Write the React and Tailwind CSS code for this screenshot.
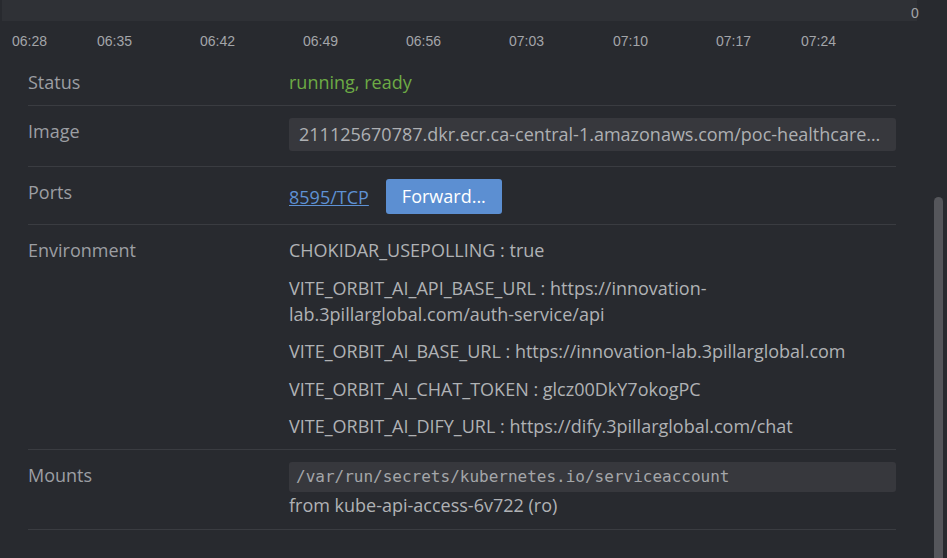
import React from 'react';

const ticks = [
  ['06:28', 12],
  ['06:35', 97],
  ['06:42', 200],
  ['06:49', 303],
  ['06:56', 406],
  ['07:03', 509],
  ['07:10', 613],
  ['07:17', 716],
  ['07:24', 801],
];

const env = [
  ['CHOKIDAR_USEPOLLING', 'true'],
  ['VITE_ORBIT_AI_API_BASE_URL', 'https://innovation-lab.3pillarglobal.com/auth-service/api'],
  ['VITE_ORBIT_AI_BASE_URL', 'https://innovation-lab.3pillarglobal.com'],
  ['VITE_ORBIT_AI_CHAT_TOKEN', 'glcz00DkY7okogPC'],
  ['VITE_ORBIT_AI_DIFY_URL', 'https://dify.3pillarglobal.com/chat'],
];

const Row = ({ label, children, pad = 'pt-3 pb-[10px]' }) => (
  <div className={`flex border-b border-[#3a3c41] ${pad}`}>
    <div className="w-[261px] shrink-0 leading-[26px] text-[#9c9ea3]">{label}</div>
    <div className="flex-1 min-w-0">{children}</div>
  </div>
);

const App = () => {
  return (
    <div
      className="relative w-[947px] h-[558px] overflow-hidden bg-[#282a2f] text-[18px]"
      style={{ fontFamily: '"Open Sans", "Noto Sans", sans-serif' }}
    >
      {/* chart axis */}
      <div className="relative h-[57px]">
        <div className="absolute left-[2px] top-0 w-[915px] h-[21px] bg-[#2f3136]" />
        <span
          className="absolute left-[911px] top-[4px] text-[14px] leading-[18px] text-[#a3a5a9]"
          style={{ fontFamily: '"Liberation Sans", sans-serif' }}
        >
          0
        </span>
        {ticks.map(([t, x]) => (
          <span
            key={t}
            className="absolute top-[32px] text-[14px] leading-[18px] text-[#a3a5a9]"
            style={{ left: x, fontFamily: '"Liberation Sans", sans-serif' }}
          >
            {t}
          </span>
        ))}
      </div>

      <div className="pl-[28px] pr-[51px]">
        <Row label="Status">
          <div className="leading-[26px] text-[#6dab45]">running, ready</div>
        </Row>

        <Row label="Image">
          <div className="mb-[5px] h-[33px] rounded-[3px] bg-[#37383d] px-[10px] leading-[33px] text-[#aeb0b3] truncate">
            211125670787.dkr.ecr.ca-central-1.amazonaws.com/poc-healthcare-ai-frontend:latest
          </div>
        </Row>

        <Row label="Ports">
          <div className="flex items-center gap-[17px]">
            <a className="text-[#5e91d4] underline leading-[26px]" href="#">8595/TCP</a>
            <button
              type="button"
              className="h-[35px] w-[116px] rounded-[3px] bg-[#5c8fd2] text-white leading-[35px]"
            >
              Forward...
            </button>
          </div>
        </Row>

        <Row label="Environment">
          <div className="flex flex-col gap-[11.5px] text-[#b0b2b5] leading-[26px] pr-[40px]">
            {env.map(([k, v]) => (
              <div key={k}>
                {k} : {v}
              </div>
            ))}
          </div>
        </Row>

        <Row label="Mounts" pad="pt-3 pb-[11px]">
          <div
            className="h-[30px] rounded-[3px] bg-[#37383d] px-[7px] text-[16px] leading-[30px] text-[#a4a6a9]"
            style={{ fontFamily: '"DejaVu Sans Mono", monospace' }}
          >
            /var/run/secrets/kubernetes.io/serviceaccount
          </div>
          <div className="leading-[26px] text-[#b0b2b5]">from kube-api-access-6v722 (ro)</div>
        </Row>
      </div>

      {/* scrollbar thumb */}
      <div className="absolute left-[934px] top-[197px] w-[9px] h-[380px] rounded-full bg-[#55565b]" />
    </div>
  );
};

export default App;
